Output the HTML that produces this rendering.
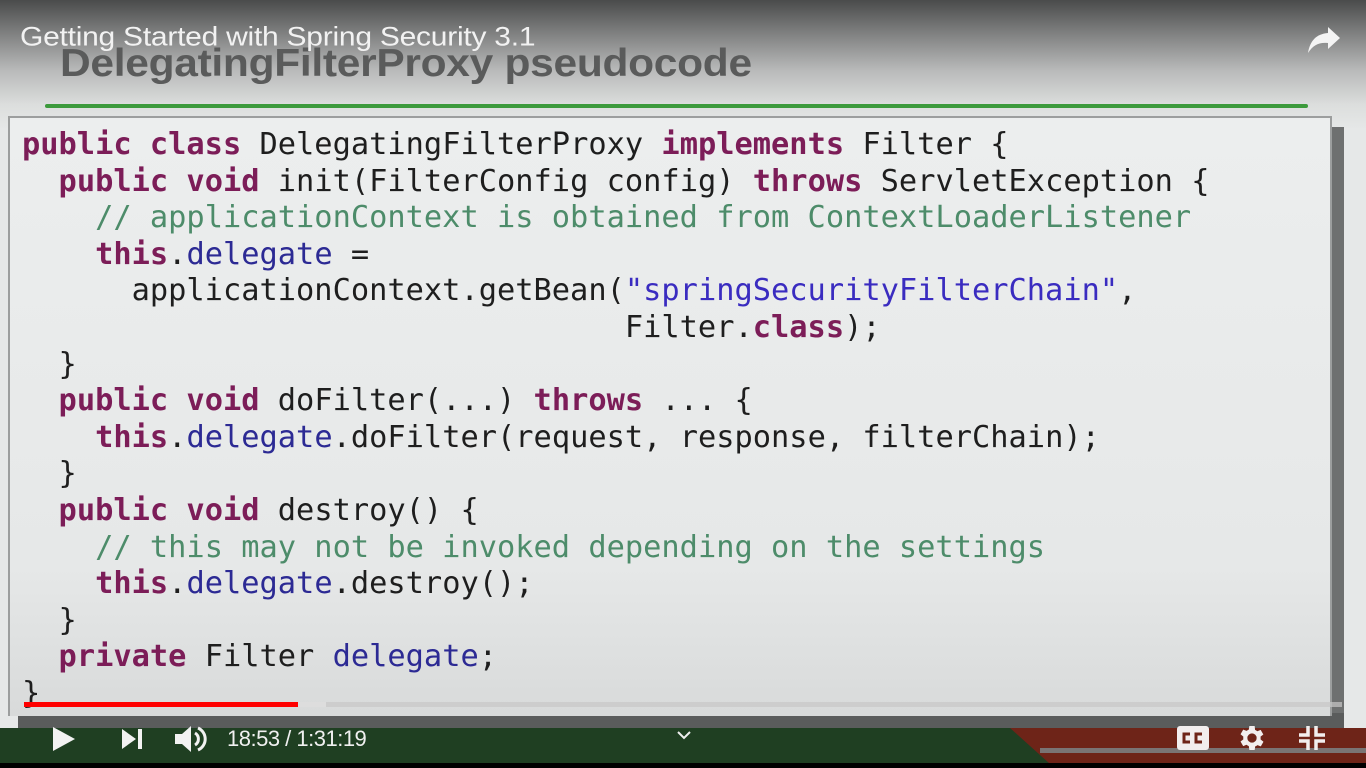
<!DOCTYPE html>
<html><head><meta charset="utf-8"><style>
*{margin:0;padding:0;box-sizing:border-box}
body{width:1366px;height:768px;overflow:hidden;background:#e6e8e8;position:relative;font-family:"Liberation Sans",sans-serif}
.topgrad{position:absolute;left:0;top:0;width:1366px;height:130px;background:linear-gradient(#4a4b4b 0px,#7a7b7b 30px,#b8b9b9 70px,#dcdedd 105px,#e6e8e8 130px)}
.title{position:absolute;left:60px;top:42px;font-size:42.5px;font-weight:bold;color:#5a5b5b;letter-spacing:-0.3px;transform:scaleY(0.92);transform-origin:top left}
.ytitle{position:absolute;left:20px;top:22px;font-size:30px;color:#f2f2f2;letter-spacing:-0.25px;transform:scaleY(0.9);transform-origin:top left}
.gline{position:absolute;left:45px;top:104px;width:1263px;height:4px;background:#3c9a3c;border-radius:2px}
.box{position:absolute;left:8px;top:116px;width:1324px;height:600px;border:2px solid #9c9e9e;border-bottom:none;background:linear-gradient(#eceeee,#e6e8e8 75%,#d8dada)}
.shadow{position:absolute;left:1332px;top:127px;width:12px;height:598px;background:#6e7070}
.shadowb{position:absolute;left:18px;top:713px;width:1326px;height:16px;background:#5a5c5c}
pre{position:absolute;left:22px;top:127px;font-family:"DejaVu Sans Mono",monospace;font-size:30.35px;line-height:36.6px;color:#1e1e1e}
.k{color:#7c1d58;font-weight:bold}
.f{color:#2c2a94}
.s{color:#3a2cc0}
.c{color:#4d8c6a}
.bar{position:absolute;left:0;top:728px;width:1366px;height:36px;background:#1f3f22}
.red{position:absolute;left:1010px;top:728px;width:356px;height:36px;background:#6e2418;clip-path:polygon(0 0,100% 0,100% 100%,40px 100%)}
.stripe{position:absolute;left:1040px;top:748px;width:326px;height:5px;background:#7a7474}
.black{position:absolute;left:0;top:763px;width:1366px;height:5px;background:#000}
.prog{position:absolute;left:24px;top:702px;width:1318px;height:5px;background:rgba(200,200,200,.7)}
.prog2{position:absolute;left:24px;top:702px;width:302px;height:5px;background:#ddd}
.prog3{position:absolute;left:24px;top:702px;width:274px;height:5px;background:#f00}
.time{position:absolute;left:227px;top:726px;color:#f0f0f0;font-size:22px;letter-spacing:-0.5px}
svg{position:absolute}
</style></head><body>
<div class="topgrad"></div>
<div class="title">DelegatingFilterProxy pseudocode</div>
<div class="gline"></div>
<div class="shadow"></div>
<div class="shadowb"></div>
<div class="box"></div>
<div class="ytitle">Getting Started with Spring Security 3.1</div>
<pre><span class="k">public class</span> DelegatingFilterProxy <span class="k">implements</span> Filter {
  <span class="k">public void</span> init(FilterConfig config) <span class="k">throws</span> ServletException {
    <span class="c">// applicationContext is obtained from ContextLoaderListener</span>
    <span class="k">this</span>.<span class="f">delegate</span> =
      applicationContext.getBean(<span class="s">"springSecurityFilterChain"</span>,
                                 Filter.<span class="k">class</span>);
  }
  <span class="k">public void</span> doFilter(...) <span class="k">throws</span> ... {
    <span class="k">this</span>.<span class="f">delegate</span>.doFilter(request, response, filterChain);
  }
  <span class="k">public void</span> destroy() {
    <span class="c">// this may not be invoked depending on the settings</span>
    <span class="k">this</span>.<span class="f">delegate</span>.destroy();
  }
  <span class="k">private</span> Filter <span class="f">delegate</span>;
}</pre>
<div class="bar"></div>
<div class="red"></div>
<div class="stripe"></div>
<div class="black"></div>
<div class="prog"></div><div class="prog2"></div><div class="prog3"></div>
<svg style="left:1306px;top:26px" width="36" height="30" viewBox="0 0 36 30"><path d="M34 12 L22 1 V7 C10 8 4 15 2 27 C7 19 13 16 22 17 V23 Z" fill="#f4f4f4"/></svg>
<svg style="left:50px;top:724px" width="28" height="30"><path d="M3 3 L25 15 L3 27 Z" fill="#f2f2f2"/></svg>
<svg style="left:120px;top:727px" width="26" height="24"><path d="M2 2 L16 12 L2 22 Z" fill="#f2f2f2"/><rect x="18" y="2" width="4" height="20" fill="#f2f2f2"/></svg>
<svg style="left:173px;top:723px" width="36" height="32"><path d="M2 11 H9 L18 3 V29 L9 21 H2 Z" fill="#f2f2f2"/><path d="M22 10 A7 7 0 0 1 22 22" stroke="#f2f2f2" stroke-width="3" fill="none"/><path d="M25 5 A12 12 0 0 1 25 27" stroke="#f2f2f2" stroke-width="3" fill="none"/></svg>
<div class="time">18:53 / 1:31:19</div>
<svg style="left:677px;top:730px" width="14" height="10"><path d="M1 2 L7 8 L13 2" stroke="#eee" stroke-width="2" fill="none"/></svg>
<svg style="left:1177px;top:726px" width="32" height="24"><rect x="0" y="0" width="32" height="24" rx="3" fill="#f2eeee"/><path d="M13 8 H7 V16 H13 M25 8 H19 V16 H25" stroke="#6e2418" stroke-width="3" fill="none"/></svg>
<svg style="left:1236px;top:722px" width="32" height="32" viewBox="0 0 24 24"><path fill="#f2eeee" d="M19.4 13a7.5 7.5 0 0 0 0-2l2.1-1.6-2-3.5-2.5 1a7 7 0 0 0-1.7-1L15 3h-4l-.4 2.7a7 7 0 0 0-1.7 1l-2.5-1-2 3.5L6.5 11a7.5 7.5 0 0 0 0 2l-2.1 1.6 2 3.5 2.5-1a7 7 0 0 0 1.7 1L11 21h4l.4-2.7a7 7 0 0 0 1.7-1l2.5 1 2-3.5zM13 15.5a3.5 3.5 0 1 1 0-7 3.5 3.5 0 0 1 0 7z" transform="translate(-1 0)"/></svg>
<svg style="left:1297px;top:724px" width="30" height="28"><path d="M11 2 V11 H2 M19 2 V11 H28 M11 26 V17 H2 M19 26 V17 H28" stroke="#f2eeee" stroke-width="3.5" fill="none"/></svg>
</body></html>
